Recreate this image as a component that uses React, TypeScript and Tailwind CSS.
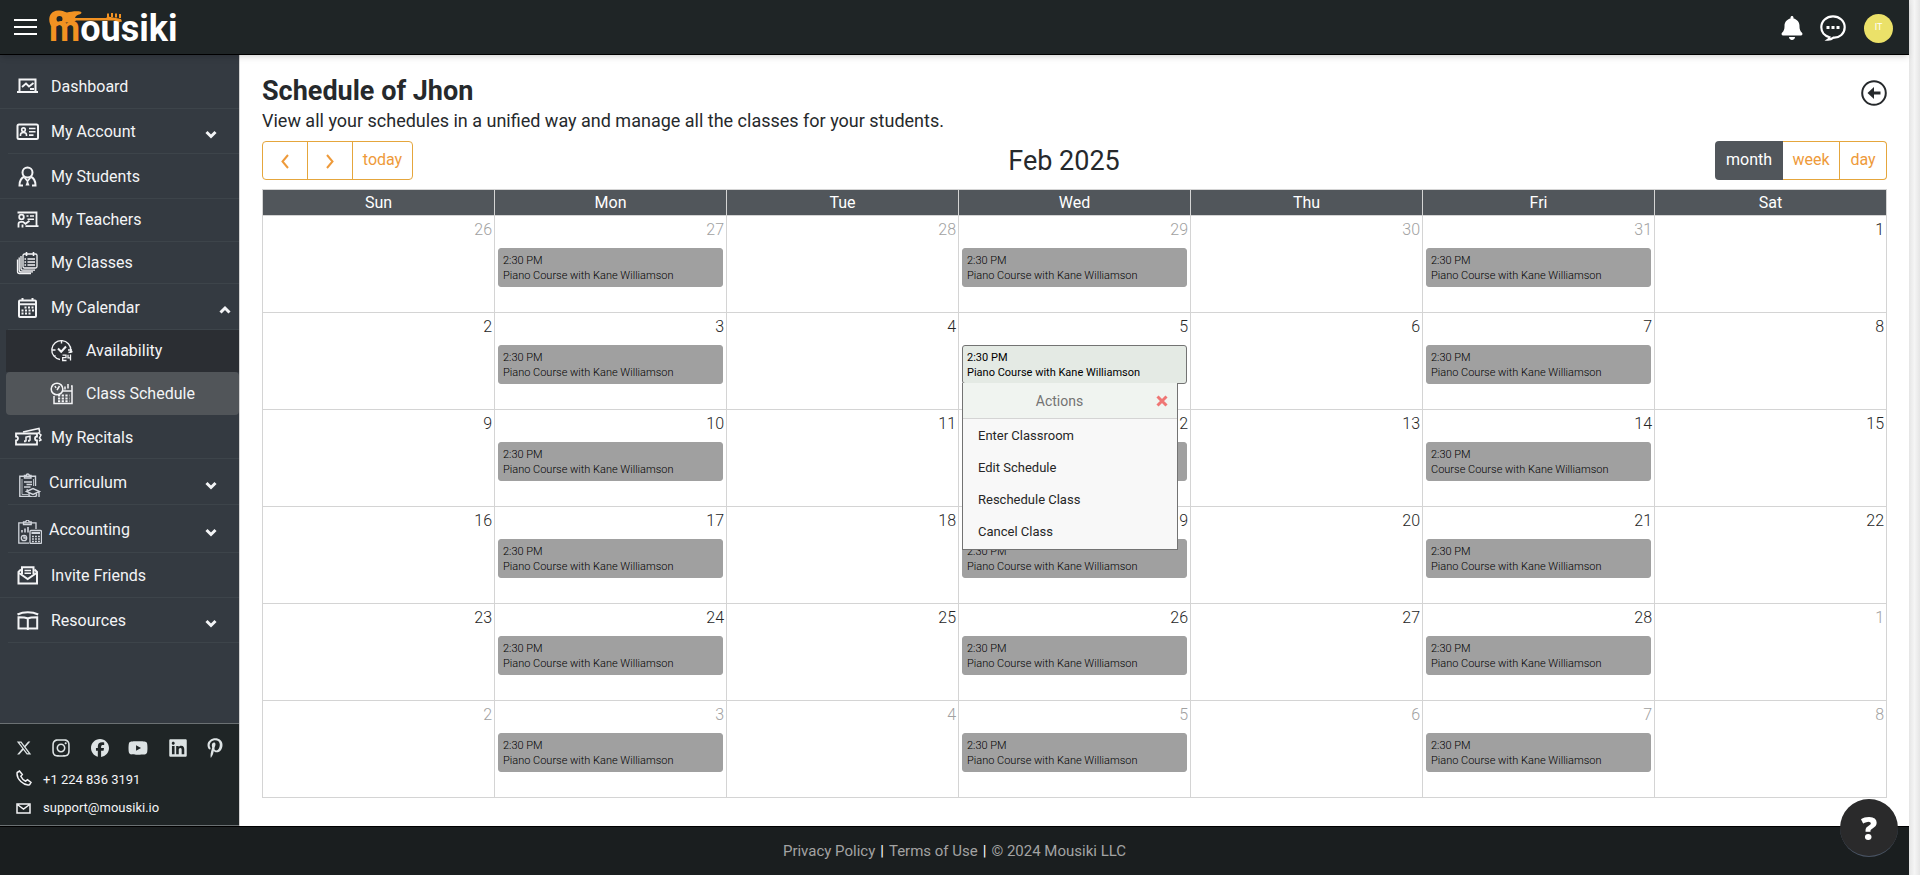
import type { ReactNode } from 'react'
import {
  FaBell,
  FaFacebook,
  FaInstagram,
  FaLinkedin,
  FaPinterestP,
  FaYoutube,
  FaXTwitter,
} from 'react-icons/fa6'

interface IconProps {
  children: ReactNode
  strokeWidth?: number
}

function Icon({ children, strokeWidth = 2 }: IconProps) {
  return (
    <svg
      className="w-6 h-6 shrink-0"
      viewBox="0 0 24 24"
      fill="none"
      stroke="currentColor"
      strokeWidth={strokeWidth}
      aria-hidden="true"
    >
      {children}
    </svg>
  )
}

const DashboardIcon = () => (
  <Icon>
    <path d="M3.5 16V4.5h16V16" />
    <path d="M1 17h21" />
    <path d="M6 12l4-3.5 3 3L17.5 8M14 14h4" strokeWidth="1.8" />
  </Icon>
)

const AccountIcon = () => (
  <Icon>
    <rect x="1.5" y="4.5" width="20.5" height="14.5" rx="1.5" />
    <circle cx="7.5" cy="9.700" r="1.8" strokeWidth="1.6" />
    <path d="M4.5 16v-1.2c0-1.8 1.2-2.3 3-2.3s3 .5 3 2.3v1.2" strokeWidth="1.6" />
    <path d="M13 8.500h6.5M13 11.800h6.5M13 15.100h4.5" strokeWidth="1.6" />
  </Icon>
)

const StudentIcon = () => (
  <Icon>
    <circle cx="11.5" cy="7.500" r="5" />
    <path d="M8.5 11.500c-3.200 1.300-5 4.200-5 9h3.500M14.500 11.500c3.200 1.300 5 4.200 5 9h-3.500" />
    <path d="M8.500 12.500l3 3.500 3-3.500" strokeWidth="1.800" />
    <path d="M11.500 15l2 5.500h-4z" fill="currentColor" stroke="none" />
  </Icon>
)

const TeacherIcon = () => (
  <Icon strokeWidth={1.8}>
    <path d="M1.500 4.500h19V18M9.500 18.200H22.500" />
    <circle cx="5.500" cy="9" r="2.300" />
    <path d="M2.500 19.500v-3.500c0-1.500 1-2.200 2.500-2.200h2l2.500 2 4-3M6.500 16.500v3" />
    <path d="M10.500 8h2M14 8h4M11.500 11.200h6.500" strokeWidth="1.500" />
  </Icon>
)

const ClassesIcon = () => (
  <Icon strokeWidth={1.3}>
    <rect x="7" y="3" width="14" height="14" rx="1.500" />
    <path d="M5 5v12.500a1.700 1.700 0 001.700 1.700H19M3.200 6.500V19a1.900 1.900 0 001.900 1.900H17M1.500 8.500v12a2 2 0 002 2H15" />
    <path d="M10.500 1v4M17.500 1v4" strokeWidth="1.600" />
    <path d="M8.500 8h1.500M11.500 8H19M8.500 11h1.500M11.500 11H19M8.500 14h1.500M11.500 14H19" strokeWidth="1.600" />
  </Icon>
)

const CalendarIcon = () => (
  <Icon>
    <rect x="3" y="4.500" width="17" height="16.500" rx="1" />
    <path d="M3 8.300h17M6.500 2v3M16.500 2v3" />
    <path d="M8.500 11.500h9.500M5.500 14.500h12.500M5.500 17.500h9.500" strokeDasharray="2 1.500" />
  </Icon>
)

const AvailabilityIcon = () => (
  <Icon strokeWidth={1.4}>
    <path d="M10 20.500A9.500 9.500 0 1120.800 11.500v2.500" />
    <path d="M11.500 1v3.500M2 11h3.500M18 11h4M4 17.500l1.500-1M18.500 13.500l4-1" />
    <path d="M8 9.500l3.200 3.200L16 7.500" strokeWidth="2" />
    <path d="M12.500 16.200h3.500v2.500h-3.300v2.800h3.800M18 15.800v3h3M20.500 15.500v6" strokeWidth="1.300" />
  </Icon>
)

const ScheduleIcon = () => (
  <Icon strokeWidth={1.5}>
    <circle cx="7" cy="7" r="5.800" />
    <path d="M9.500 4L7 8M5 4l1 2M15 4.500v3M18 2v4.500M21 4h1v17.500H4V14" />
    <path d="M13 9h9" />
    <path d="M8 13.500h11.500M8 16.500h11.500M8 19.200h11.500" strokeDasharray="2.200 1.500" strokeWidth="2" />
  </Icon>
)

const RecitalIcon = () => (
  <svg className="w-7 h-6 shrink-0" viewBox="0 0 28 24" fill="none" stroke="currentColor" strokeWidth="1.800" aria-hidden="true">
    <path d="M2 7.500h21v3a2 2 0 000 4v4H2v-4a2 2 0 000-4z" />
    <path d="M9 6l16-3.500.7 3.500-1.200 1 2.500 2-1.500 3 1.500 2-2 1" strokeWidth="1.500" />
    <path d="M12 15.500V11l4-.8v4.600" strokeWidth="1.500" />
    <path d="M10 15.300h1.800M14 14.700h1.800" strokeWidth="2" />
  </svg>
)

const CurriculumIcon = () => (
  <Icon strokeWidth={1.4}>
    <path d="M17.500 13V3.200H1.800v20.300h10" />
    <path d="M4 6v15.500h6M15.500 6v7" strokeWidth=".8" />
    <path d="M6.500 2.500h1.800a1.500 1.500 0 013 0H13V5H6.500z" />
    <path d="M6 9h8M8.500 11.500h5.500M6 14h6.500M8.500 17H10" />
    <path d="M8.500 18.500l6.500-3 6.500 3-6.500 3zM11 20v2.800c2 1.200 5.500 1.200 7.500 0V20M21 19v5" />
  </Icon>
)

const AccountingIcon = () => (
  <Icon strokeWidth={1.3}>
    <path d="M18 9V2.800H.8v20.400H11" />
    <path d="M5.500 1.800h2.300a1.500 1.500 0 013.200 0h2.200v2.700H5.500z" />
    <path d="M4 12.500V10M7 12.500V8.500M10 12.500V7" strokeWidth="1.600" />
    <circle cx="6" cy="18" r="2.700" />
    <path d="M6 15v3h3" />
    <rect x="12" y="10.500" width="11.500" height="13" rx="1" />
    <path d="M13.500 13h8.500" strokeWidth="2" />
    <path d="M14 16.500h8M14 19h8M14 21.500h8" strokeDasharray="1.900 1.100" strokeWidth="1.500" />
  </Icon>
)

const InviteIcon = () => (
  <Icon>
    <path d="M5 5.500L2.500 8v11.500h18.500V8l-2.500-2.500" />
    <path d="M3 9l8.700 6L20.500 9" />
    <path d="M6 10V3.200h11.500V10" />
    <path d="M8.500 6.500h6.500M8.500 9.200h6.500" strokeWidth="1.500" />
  </Icon>
)

const ResourcesIcon = () => (
  <Icon>
    <path d="M1.500 5.500c3-1.500 6.500-2.300 10.300-2.300s7.400.8 10.400 2.300" />
    <path d="M11.800 9.500c-2.500-1.300-5-1.300-9.300-1.300v11.300h18.700V8.200c-4.200 0-7 0-9.400 1.300zM11.800 9.500V21" />
  </Icon>
)

const ChevronIcon = ({ up = false }) => (
  <svg
    className={`w-3 h-3 shrink-0 mt-1 ${up ? 'mr-2' : 'mr-[22px]'}`}
    viewBox="0 0 12 12"
    fill="none"
    stroke="currentColor"
    strokeWidth="3"
    aria-hidden="true"
  >
    <path d={up ? 'M1.500 8.500L6 4l4.500 4.500' : 'M1.500 4L6 8.500 10.500 4'} />
  </svg>
)

interface MenuItem {
  label: string
  icon: ReactNode
  height: string
  expand?: 'down' | 'up'
  tight?: boolean
  wide?: boolean
}

const topItems: MenuItem[] = [
  { label: 'Dashboard', icon: <DashboardIcon />, height: 'h-[54px] pt-[10px]' },
  { label: 'My Account', icon: <AccountIcon />, height: 'h-[45px] pt-[2px]', expand: 'down' },
  { label: 'My Students', icon: <StudentIcon />, height: 'h-[45px] pt-[2px]' },
  { label: 'My Teachers', icon: <TeacherIcon />, height: 'h-[43px]' },
  { label: 'My Classes', icon: <ClassesIcon />, height: 'h-[42px]' },
  { label: 'My Calendar', icon: <CalendarIcon />, height: 'h-[46px] pt-[2px]', expand: 'up' },
]

const bottomItems: MenuItem[] = [
  { label: 'My Recitals', icon: <RecitalIcon />, height: 'h-[44px] pt-[2px]', wide: true },
  { label: 'Curriculum', icon: <CurriculumIcon />, height: 'h-[46px] pt-[2px]', expand: 'down', tight: true },
  { label: 'Accounting', icon: <AccountingIcon />, height: 'h-[48px] pt-[2px]', expand: 'down', tight: true },
  { label: 'Invite Friends', icon: <InviteIcon />, height: 'h-[45px] pt-[2px]' },
  { label: 'Resources', icon: <ResourcesIcon />, height: 'h-[45px] pt-[2px]', expand: 'down' },
]

function iconBox(item: MenuItem) {
  if (item.tight) return 'w-[33px] pl-[2px] pt-1 text-gray-300'
  if (item.wide) return 'w-[37px] -ml-[2px]'
  return 'w-[35px]'
}

function MenuRow({ item }: { item: MenuItem }) {
  return (
    <li className={`border-b border-[#3d444a] ${item.expand ? 'ml-2 pl-2' : 'pl-4'} ${item.height}`}>
      <a href="#" className="flex items-center h-full">
        <span className={`shrink-0 ${iconBox(item)}`}>{item.icon}</span>
        <span className="grow">{item.label}</span>
        {item.expand && <ChevronIcon up={item.expand === 'up'} />}
      </a>
    </li>
  )
}

function Sidebar() {
  return (
    <aside className="w-[240px] shrink-0 flex flex-col bg-[#343a41] border-r border-neutral-300 text-base text-gray-100">
      <nav>
        <ul>
          {topItems.map((item) => (
            <MenuRow key={item.label} item={item} />
          ))}
          <li className="pl-[6px]">
            <ul>
              <li className="h-[42px] bg-[#2b2e33]">
                <a href="#" className="flex items-center h-full pl-11 gap-3">
                  <AvailabilityIcon />
                  Availability
                </a>
              </li>
              <li className="h-[43px] bg-[#515559] rounded-sm">
                <a href="#" className="flex items-center h-full pl-11 gap-3">
                  <ScheduleIcon />
                  Class Schedule
                </a>
              </li>
            </ul>
          </li>
          {bottomItems.map((item) => (
            <MenuRow key={item.label} item={item} />
          ))}
        </ul>
      </nav>

      <div className="mt-auto h-[103px] bg-[#1f2526] border-y border-[#6b7173] px-4 pt-[14px] text-[13px]">
        <div className="flex items-center justify-between text-[#dde3e4]">
          <a href="#" aria-label="X"><FaXTwitter className="w-4 h-5" /></a>
          <a href="#" aria-label="Instagram"><FaInstagram className="w-5 h-5" /></a>
          <a href="#" aria-label="Facebook"><FaFacebook className="w-[18px] h-5" /></a>
          <a href="#" aria-label="YouTube"><FaYoutube className="w-5 h-5" /></a>
          <a href="#" aria-label="LinkedIn"><FaLinkedin className="w-5 h-5" /></a>
          <a href="#" aria-label="Pinterest"><FaPinterestP className="w-4 h-5" /></a>
        </div>
        <a href="#" className="flex items-center gap-[11px] h-7 mt-2">
          <svg className="w-4 h-4 -mt-1" viewBox="0 0 16 16" fill="none" stroke="currentColor" strokeWidth="1.500" aria-hidden="true">
            <path d="M1.200 2.500L3.500 1l2.800 3.500L4.800 6.300c1 2.200 2.700 3.900 4.900 4.900l1.800-1.500 3.500 2.800-1.500 2.300C8 16 0 9 1.200 2.500z" />
          </svg>
          +1 224 836 3191
        </a>
        <a href="#" className="flex items-center gap-[11px] h-7">
          <svg className="w-4 h-4" viewBox="0 0 16 16" fill="none" stroke="currentColor" strokeWidth="1.500" aria-hidden="true">
            <path d="M1 4h13v9H1zM2 5l5.500 4L13 5" />
          </svg>
          support@mousiki.io
        </a>
      </div>
    </aside>
  )
}

function Logo() {
  return (
    <a href="#" className="relative block pt-1 text-4xl leading-[42px] font-bold text-white">
      <span className="text-[#f29222]">m</span>ousiki
      <svg className="absolute left-0 top-0 w-[76px] h-7" viewBox="0 0 76 28" fill="#f29222" aria-hidden="true">
        {/* guitar body with its sound hole, then neck and head */}
        <path
          fillRule="evenodd"
          d="M2 22C-1.500 16 0 7 9 6.500c4-.5 6 1 9 2 3-.5 8-1.500 13-1 2.500.5 1.500 2.500-1 3-2 .8-3.500 1.500-4 3.500h31l2-1.500 13 2.500 1 2.500-2 .5-6-1.500H27c-2 2-4 2.500-6 2.500-4-1-8-.5-12 2.500zM10.500 12a3 3 0 100 6 3 3 0 000-6z"
        />
        <path d="M58 9.500h2v4h-2zM62 9h2v4h-2zM66 9.500h2v4h-2zM70 10h2v4h-2z" />
      </svg>
    </a>
  )
}

function Header() {
  return (
    <header className="relative z-10 flex items-center h-[55px] pl-[14px] pr-4 bg-[#1f2526] border-b border-black shadow-md">
      <button type="button" aria-label="Toggle menu" className="mr-3 text-white">
        <svg className="w-[23px] h-[18px]" viewBox="0 0 23 18" stroke="currentColor" strokeWidth="2" aria-hidden="true">
          <path d="M0 2h23M0 9h23M0 16h23" />
        </svg>
      </button>
      <Logo />
      <div className="ml-auto flex items-center pt-[2px] text-white">
        <button type="button" aria-label="Notifications" className="mr-4">
          <FaBell className="w-6 h-6" />
        </button>
        <button type="button" aria-label="Messages" className="mr-[18px]">
          <svg className="w-[26px] h-[26px]" viewBox="0 0 26 26" fill="none" stroke="currentColor" strokeWidth="2.200" aria-hidden="true">
            <path d="M9.500 22.200C4.500 21 1.300 17 1.300 12.300 1.300 6 6.500 1.300 13 1.300S24.700 6 24.700 12.300 19.500 23 13.500 22.600c-1.500 1.200-3.500 2-5.500 2 1-.7 1.500-1.500 1.500-2.400z" />
            <path d="M6.500 12.500h3M11.500 12.500h3M16.500 12.500h3" strokeWidth="3" />
          </svg>
        </button>
        <button type="button" className="w-[29px] h-[29px] rounded-full bg-[#ebe169] text-[9px]">
          IT
        </button>
      </div>
    </header>
  )
}

const weekdays = ['Sun', 'Mon', 'Tue', 'Wed', 'Thu', 'Fri', 'Sat']

const weeks = [
  [26, 27, 28, 29, 30, 31, 1],
  [2, 3, 4, 5, 6, 7, 8],
  [9, 10, 11, 12, 13, 14, 15],
  [16, 17, 18, 19, 20, 21, 22],
  [23, 24, 25, 26, 27, 28, 1],
  [2, 3, 4, 5, 6, 7, 8],
]

const actions = ['Enter Classroom', 'Edit Schedule', 'Reschedule Class', 'Cancel Class']

function isOtherMonth(week: number, day: number) {
  return (week === 0 && day > 20) || week === 5 || (week === 4 && day < 20)
}

function ActionsMenu() {
  return (
    <div className="absolute left-0 top-[38px] z-10 w-[216px] bg-[#f8f8f8] border border-t-0 border-neutral-500 text-[13px] text-neutral-800">
      <div className="flex items-center h-9 pl-4 pr-[9px] bg-[#f0f4f0] border-b border-neutral-300">
        <span className="grow text-center text-sm text-neutral-500">Actions</span>
        <button type="button" aria-label="Close" className="ml-4 text-[#ef7674]">
          <svg className="w-3 h-3" viewBox="0 0 12 12" stroke="currentColor" strokeWidth="3" aria-hidden="true">
            <path d="M1.500 1.500l9 9M10.500 1.500l-9 9" />
          </svg>
        </button>
      </div>
      <ul className="pb-[2px]">
        {actions.map((action) => (
          <li key={action}>
            <button type="button" className="block w-full h-8 px-[15px] pt-[2px] text-left">
              {action}
            </button>
          </li>
        ))}
      </ul>
    </div>
  )
}

interface EventProps {
  title: string
  active: boolean
}

function CalendarEvent({ title, active }: EventProps) {
  const style = active
    ? 'bg-[#e4eae4] border-neutral-500 text-black'
    : 'bg-[#a0a0a0] border-[#a0a0a0] font-light text-black'
  return (
    <div className="relative mt-[5px] mx-[3px]">
      <button
        type="button"
        className={`block w-full h-[39px] px-1 border rounded-[3px] text-left text-[11px] leading-[15px] ${style}`}
      >
        2:30 PM
        <br />
        {title}
      </button>
      {active && <ActionsMenu />}
    </div>
  )
}

function Calendar() {
  return (
    <table className="w-full table-fixed border-collapse">
      <thead>
        <tr className="h-[26px] bg-[#51565b] text-white">
          {weekdays.map((name) => (
            <th key={name} className="border border-neutral-300 p-0 text-base leading-6 font-normal">
              {name}
            </th>
          ))}
        </tr>
      </thead>
      <tbody>
        {weeks.map((days, week) => (
          <tr key={week} className="h-[97px]">
            {days.map((day, col) => (
              <td key={col} className="border border-neutral-300 p-0 align-top">
                <div
                  className={`pr-[2px] pt-[2px] pb-px text-right text-base leading-6 font-light ${
                    isOtherMonth(week, day) ? 'text-neutral-400' : 'text-neutral-800'
                  }`}
                >
                  {day}
                </div>
                {(col === 1 || col === 3 || col === 5) && (
                  <CalendarEvent
                    title={`${week === 2 && col === 5 ? 'Course' : 'Piano'} Course with Kane Williamson`}
                    active={week === 1 && col === 3}
                  />
                )}
              </td>
            ))}
          </tr>
        ))}
      </tbody>
    </table>
  )
}

function Toolbar() {
  return (
    <div className="flex items-center justify-between mt-[7px] mb-[9px] text-base text-[#ee9a3a]">
      <div className="flex h-[39px] border border-[#e5a63c] rounded divide-x divide-[#e5a63c]">
        <button type="button" aria-label="Previous month" className="w-[45px] flex items-center justify-center">
          <svg className="w-3 h-4" viewBox="0 0 12 16" fill="none" stroke="currentColor" strokeWidth="2" aria-hidden="true">
            <path d="M9 2L3.500 8.500 9 15" />
          </svg>
        </button>
        <button type="button" aria-label="Next month" className="w-[45px] flex items-center justify-center">
          <svg className="w-3 h-4" viewBox="0 0 12 16" fill="none" stroke="currentColor" strokeWidth="2" aria-hidden="true">
            <path d="M3 2l5.500 6.500L3 15" />
          </svg>
        </button>
        <button type="button" className="w-[59px] pb-[2px]">today</button>
      </div>
      <h2 className="text-[27px] leading-8 text-[#26292c]">Feb 2025</h2>
      <div className="flex h-[39px]">
        <button type="button" className="w-[68px] pb-[2px] rounded-l bg-[#51565b] text-white">month</button>
        <button type="button" className="w-[57px] pb-[2px] border-y border-r border-[#e5a63c]">week</button>
        <button type="button" className="w-[47px] pb-[2px] border-y border-r border-[#e5a63c] rounded-r">day</button>
      </div>
    </div>
  )
}

export default function App() {
  return (
    <div className="flex min-h-screen bg-white font-['Roboto',sans-serif]">
      <div className="grow flex flex-col">
        <Header />
        <div className="grow flex">
          <Sidebar />
          <main className="grow px-[22px] pt-5 pb-7 text-[#26292c]">
            <div className="flex items-start justify-between">
              <div>
                <h1 className="text-[27px] leading-8 font-bold">Schedule of Jhon</h1>
                <p className="pt-px text-lg leading-[26px]">
                  View all your schedules in a unified way and manage all the classes for your students.
                </p>
              </div>
              <button type="button" aria-label="Back" className="mt-[5px]">
                <svg className="w-[26px] h-[26px]" viewBox="0 0 26 26" fill="none" stroke="currentColor" strokeWidth="2" aria-hidden="true">
                  <circle cx="13" cy="13" r="11.800" />
                  <path d="M11 13h8.500" strokeWidth="3" />
                  <path d="M6.500 13l6.500-6v12z" fill="currentColor" stroke="none" />
                </svg>
              </button>
            </div>
            <Toolbar />
            <Calendar />
          </main>
        </div>
        <footer className="flex items-center justify-center gap-[5px] h-[49px] bg-[#1a1e1f] border-t border-black text-[15px] text-[#a3a3a3]">
          <a href="#">Privacy Policy</a>
          <span className="text-white">|</span>
          <a href="#">Terms of Use</a>
          <span className="text-white">|</span>
          <span>© 2024 Mousiki LLC</span>
        </footer>
      </div>
      <div className="w-[11px] shrink-0 bg-linear-to-r from-neutral-200 via-neutral-100 to-neutral-200" />
      <button
        type="button"
        aria-label="Help"
        className="fixed z-20 right-[22px] bottom-[18px] w-[58px] h-[58px] rounded-full bg-[#2a2a2b] border-b border-gray-600 font-['Open_Sans',sans-serif] text-[32px] font-extrabold text-white"
      >
        ?
      </button>
    </div>
  )
}
